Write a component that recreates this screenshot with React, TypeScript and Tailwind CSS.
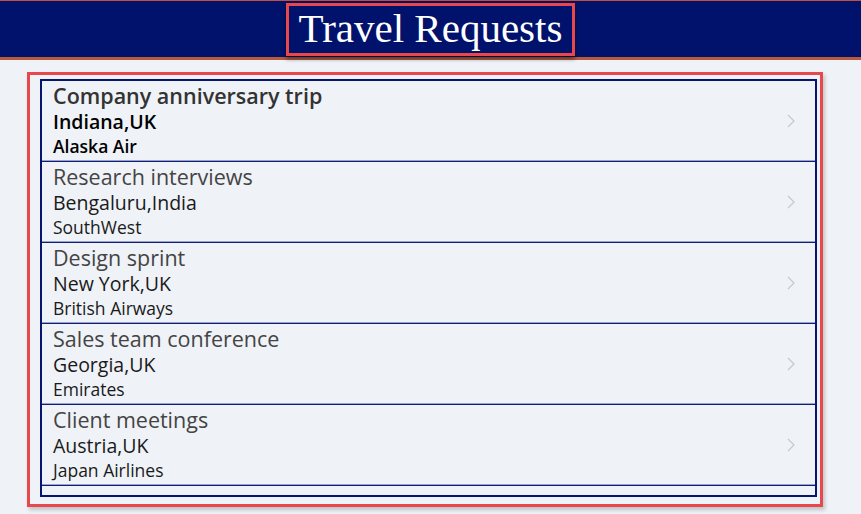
const requests = [
  { title: "Company anniversary trip", place: "Indiana,UK", airline: "Alaska Air", selected: true },
  { title: "Research interviews", place: "Bengaluru,India", airline: "SouthWest" },
  { title: "Design sprint", place: "New York,UK", airline: "British Airways" },
  { title: "Sales team conference", place: "Georgia,UK", airline: "Emirates" },
  { title: "Client meetings", place: "Austria,UK", airline: "Japan Airlines" },
];

const Chevron = () => (
  <svg width="8" height="14" viewBox="0 0 8 14" fill="none">
    <path d="M1 1l6 6-6 6" stroke="#c4c8d2" strokeWidth="1.2" />
  </svg>
);

export default function App() {
  return (
    <div className="w-[861px] h-[514px] bg-[#eff2f7] overflow-hidden font-['Open_Sans',sans-serif]">
      {/* Header */}
      <header className="h-[60px] bg-[#00126b] border-t border-[#c0503a] border-b-[3px] border-b-[#b85a3e] flex justify-center">
        <div className="w-[289px] h-[53px] mt-[2px] border-[3px] border-[#e8474c] shadow-[0_3px_4px_rgba(0,0,0,0.45)] flex items-center justify-center">
          <h1 className="text-white text-[41px] leading-none whitespace-nowrap font-['Liberation_Serif',serif] mt-[-2px]">
            Travel Requests
          </h1>
        </div>
      </header>

      {/* List */}
      <div className="ml-[27px] mt-[12px] w-[796px] h-[435px] border-[3px] border-[#e8474c] shadow-[2px_3px_4px_rgba(0,0,0,0.2)] pt-[4px] pl-[10px] pr-[3px] pb-[7px]">
        <div className="h-full border-2 border-[#06166e] flex flex-col">
          {requests.map((r) => (
            <div key={r.title} className="h-[81px] flex flex-col shrink-0">
              <div className="flex-1 flex items-center pl-[11px] pr-[20px]">
                <div className="flex-1 flex flex-col -mt-[2px]">
                  <div
                    className={
                      r.selected
                        ? "text-[21.5px] leading-[27px] font-semibold text-[#333]"
                        : "text-[21.5px] leading-[27px] text-[#444]"
                    }
                  >
                    {r.title}
                  </div>
                  <div
                    className={
                      r.selected
                        ? "text-[19.5px] leading-[26px] font-semibold text-black"
                        : "text-[19.5px] leading-[26px] text-[#1a1a1a]"
                    }
                  >
                    {r.place}
                  </div>
                  <div
                    className={
                      r.selected
                        ? "text-[17.5px] leading-[22px] font-semibold text-black"
                        : "text-[17.5px] leading-[22px] text-[#1a1a1a]"
                    }
                  >
                    {r.airline}
                  </div>
                </div>
                <Chevron />
              </div>
              <div className="h-px bg-[#9aa2cc]" />
              <div className="h-px bg-[#0f1f78]" />
            </div>
          ))}
        </div>
      </div>
    </div>
  );
}
